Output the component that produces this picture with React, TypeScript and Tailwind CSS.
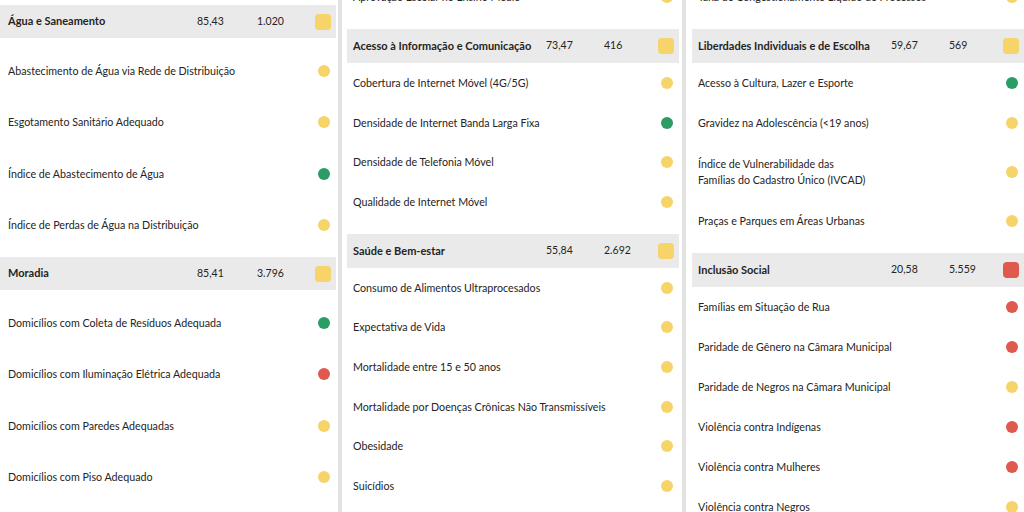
import React from "react";

type Status = "g" | "y" | "r";

type Row = { label: string[]; status: Status };

type Group = {
  title: string;
  score: string;
  count: string;
  status: Status;
  rows: Row[];
};

const statusBg: Record<Status, string> = {
  g: "bg-[#2b9d64]",
  y: "bg-[#f6d469]",
  r: "bg-[#e0594f]",
};

const r = (label: string, status: Status, extra?: string): Row => ({
  label: extra ? [label, extra] : [label],
  status,
});

const column1: Group[] = [
  {
    title: "Água e Saneamento",
    score: "85,43",
    count: "1.020",
    status: "y",
    rows: [
      r("Abastecimento de Água via Rede de Distribuição", "y"),
      r("Esgotamento Sanitário Adequado", "y"),
      r("Índice de Abastecimento de Água", "g"),
      r("Índice de Perdas de Água na Distribuição", "y"),
    ],
  },
  {
    title: "Moradia",
    score: "85,41",
    count: "3.796",
    status: "y",
    rows: [
      r("Domicílios com Coleta de Resíduos Adequada", "g"),
      r("Domicílios com Iluminação Elétrica Adequada", "r"),
      r("Domicílios com Paredes Adequadas", "y"),
      r("Domicílios com Piso Adequado", "y"),
    ],
  },
];

const column2: Group[] = [
  {
    title: "Acesso à Informação e Comunicação",
    score: "73,47",
    count: "416",
    status: "y",
    rows: [
      r("Cobertura de Internet Móvel (4G/5G)", "y"),
      r("Densidade de Internet Banda Larga Fixa", "g"),
      r("Densidade de Telefonia Móvel", "y"),
      r("Qualidade de Internet Móvel", "y"),
    ],
  },
  {
    title: "Saúde e Bem-estar",
    score: "55,84",
    count: "2.692",
    status: "y",
    rows: [
      r("Consumo de Alimentos Ultraprocesados", "y"),
      r("Expectativa de Vida", "y"),
      r("Mortalidade entre 15 e 50 anos", "y"),
      r("Mortalidade por Doenças Crônicas Não Transmissíveis", "y"),
      r("Obesidade", "y"),
      r("Suicídios", "y"),
    ],
  },
];

const column3: Group[] = [
  {
    title: "Liberdades Individuais e de Escolha",
    score: "59,67",
    count: "569",
    status: "y",
    rows: [
      r("Acesso à Cultura, Lazer e Esporte", "g"),
      r("Gravidez na Adolescência (<19 anos)", "y"),
      r("Índice de Vulnerabilidade das", "y", "Famílias do Cadastro Único (IVCAD)"),
      r("Praças e Parques em Áreas Urbanas", "y"),
    ],
  },
  {
    title: "Inclusão Social",
    score: "20,58",
    count: "5.559",
    status: "r",
    rows: [
      r("Famílias em Situação de Rua", "r"),
      r("Paridade de Gênero na Câmara Municipal", "r"),
      r("Paridade de Negros na Câmara Municipal", "y"),
      r("Violência contra Indígenas", "r"),
      r("Violência contra Mulheres", "r"),
      r("Violência contra Negros", "y"),
    ],
  },
];

function cn(...parts: (string | false | undefined)[]) {
  return parts.filter(Boolean).join(" ");
}

const GroupHeader = ({ group, first }: { group: Group; first?: boolean }) => (
  <div
    className={cn(
      "grid items-center bg-[#eaeaea] pr-[5px]",
      first
        ? "h-[33px] grid-cols-[189px_60px_1fr_16px] pl-[8px]"
        : "h-[34px] grid-cols-[193px_58px_1fr_16px] pl-[6px]"
    )}
  >
    <span className="text-[11px] font-bold text-[#252423] whitespace-nowrap">{group.title}</span>
    <span className="text-[10.5px] text-[#252423]">{group.score}</span>
    <span className="text-[10.5px] text-[#252423]">{group.count}</span>
    <span className={cn("size-4 rounded-[4px]", statusBg[group.status])} />
  </div>
);

const IndicatorRow = ({ row, height, first }: { row: Row; height: string; first?: boolean }) => (
  <div
    className={cn(
      "flex items-center justify-between pr-[6px]",
      first ? "pl-[8px]" : "pl-[6px]",
      row.label.length > 1 ? "h-[58px]" : height
    )}
  >
    <span className="text-[10.7px] leading-[16px] text-[#252423]">
      {row.label.map((line) => (
        <span key={line} className="block">
          {line}
        </span>
      ))}
    </span>
    <span className={cn("size-3 rounded-full", statusBg[row.status])} />
  </div>
);

const App = () => {
  return (
    <div
      className="flex h-[512px] w-[1024px] gap-[4px] overflow-hidden bg-[#e3e3e3]"
      style={{ fontFamily: "Lato, 'Open Sans', sans-serif" }}
    >
      {/* first column: taller rows */}
      <div className="w-[338px] shrink-0 bg-white pr-[2px] pt-[5px]">
        {column1.map((g) => (
          <div key={g.title}>
            <GroupHeader group={g} first />
            <div className="pt-[7px] pb-[6px]">
              {g.rows.map((row) => (
                <IndicatorRow key={row.label[0]} row={row} height="h-[51.5px]" first />
              ))}
            </div>
          </div>
        ))}
      </div>

      <div className="w-[340px] shrink-0 bg-white pl-[5px] pr-[3px]">
        <div className="-mt-[23px]">
          <IndicatorRow row={r("Aprovação Escolar no Ensino Médio", "y")} height="h-[40px]" />
          {column2.map((g) => (
            <div key={g.title} className="pt-[12px]">
              <GroupHeader group={g} />
              {g.rows.map((row) => (
                <IndicatorRow key={row.label[0]} row={row} height="h-[39.7px]" />
              ))}
            </div>
          ))}
        </div>
      </div>

      <div className="flex-1 bg-white pl-[6px]">
        <div className="-mt-[23px] w-[332px]">
          <IndicatorRow row={r("Taxa de Congestionamento Líquido de Processos", "y")} height="h-[40px]" />
          {column3.map((g) => (
            <div key={g.title} className="pt-[12px]">
              <GroupHeader group={g} />
              {g.rows.map((row) => (
                <IndicatorRow key={row.label[0]} row={row} height="h-[40px]" />
              ))}
            </div>
          ))}
        </div>
      </div>
    </div>
  );
};

export default App;
